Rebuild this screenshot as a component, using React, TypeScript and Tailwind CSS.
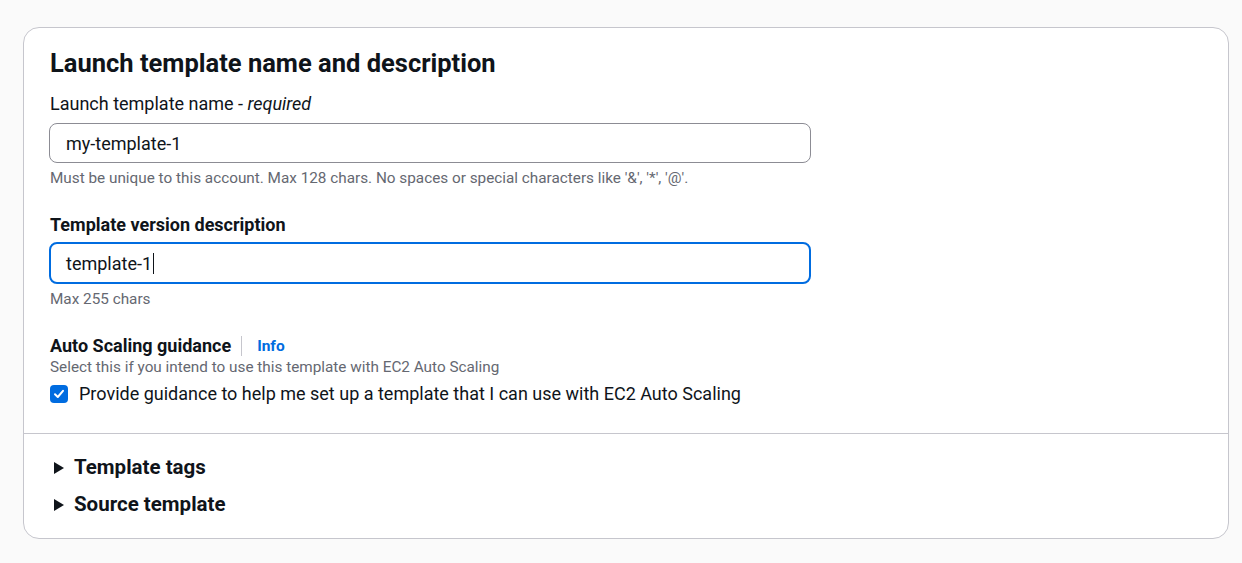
import React from "react";

const font = { fontFamily: "Roboto, 'Liberation Sans', sans-serif" };

const Caret = () => (
  <svg width="12" height="14" viewBox="0 0 12 14" className="shrink-0">
    <path d="M1 1 L11 7 L1 13 Z" fill="#0f141a" />
  </svg>
);

const Expander: React.FC<{ title: string }> = ({ title }) => (
  <div className="flex h-[37px] items-center gap-[9px]">
    <Caret />
    <span className="text-[20.5px] font-bold text-[#0f141a]">{title}</span>
  </div>
);

export default function App() {
  return (
    <div className="min-h-[563px] overflow-hidden bg-[#fafafa] pt-[27px]" style={font}>
      <section className="ml-[23px] w-[1206px] rounded-[16px] border border-[#c6c6cd] bg-white">
        <div className="pb-[28px] pl-[26px] pr-[20px] pt-[19px]">
          <h2 className="text-[25.5px] font-bold leading-[32px] text-[#0f141a]">
            Launch template name and description
          </h2>

          <label className="mt-[14px] block text-[18px] leading-[22px] text-[#0f141a]">
            Launch template name - <i>required</i>
          </label>
          <div className="-ml-px mt-[8px] flex h-[40px] w-[762px] items-center rounded-[8px] border border-[#8c8c94] px-[16px] text-[18px] text-[#0f141a]">
            my-template-1
          </div>
          <p className="mt-[6px] text-[15.3px] leading-[18px] text-[#656871]">
            Must be unique to this account. Max 128 chars. No spaces or special characters like '&amp;', '*', '@'.
          </p>

          <label className="mt-[27px] block text-[18px] font-bold leading-[22px] text-[#0f141a]">
            Template version description
          </label>
          <div className="-ml-px mt-[6px] flex h-[42px] w-[762px] items-center rounded-[8px] border-2 border-[#006ce0] px-[15px] text-[18px] text-[#0f141a]">
            template-1
            <span className="ml-[1px] inline-block h-[21px] w-px bg-[#0f141a]" />
          </div>
          <p className="mt-[6px] text-[15.3px] leading-[18px] text-[#656871]">Max 255 chars</p>

          <div className="mt-[27px] flex items-center leading-[22px]">
            <span className="text-[18px] font-bold text-[#0f141a]">Auto Scaling guidance</span>
            <span className="ml-[10px] mr-[15px] inline-block h-[20px] w-px bg-[#c6c6cd]" />
            <span className="text-[15.5px] font-bold text-[#006ce0]">Info</span>
          </div>
          <p className="mt-[1px] text-[15.3px] leading-[18px] text-[#656871]">
            Select this if you intend to use this template with EC2 Auto Scaling
          </p>
          <div className="mt-[7px] flex items-center gap-[11px]">
            <span className="flex h-[18px] w-[18px] items-center justify-center rounded-[4px] bg-[#006ce0]">
              <svg width="12" height="12" viewBox="0 0 12 12">
                <path d="M2 6.3 L4.8 9 L10 2.8" fill="none" stroke="white" strokeWidth="2" strokeLinecap="round" strokeLinejoin="round" />
              </svg>
            </span>
            <span className="text-[18px] leading-[22px] text-[#0f141a]">
              Provide guidance to help me set up a template that I can use with EC2 Auto Scaling
            </span>
          </div>
        </div>
        <div className="border-t border-[#c6c6cd] pb-[15px] pl-[29px] pt-[15px]">
          <Expander title="Template tags" />
          <Expander title="Source template" />
        </div>
      </section>
    </div>
  );
}
